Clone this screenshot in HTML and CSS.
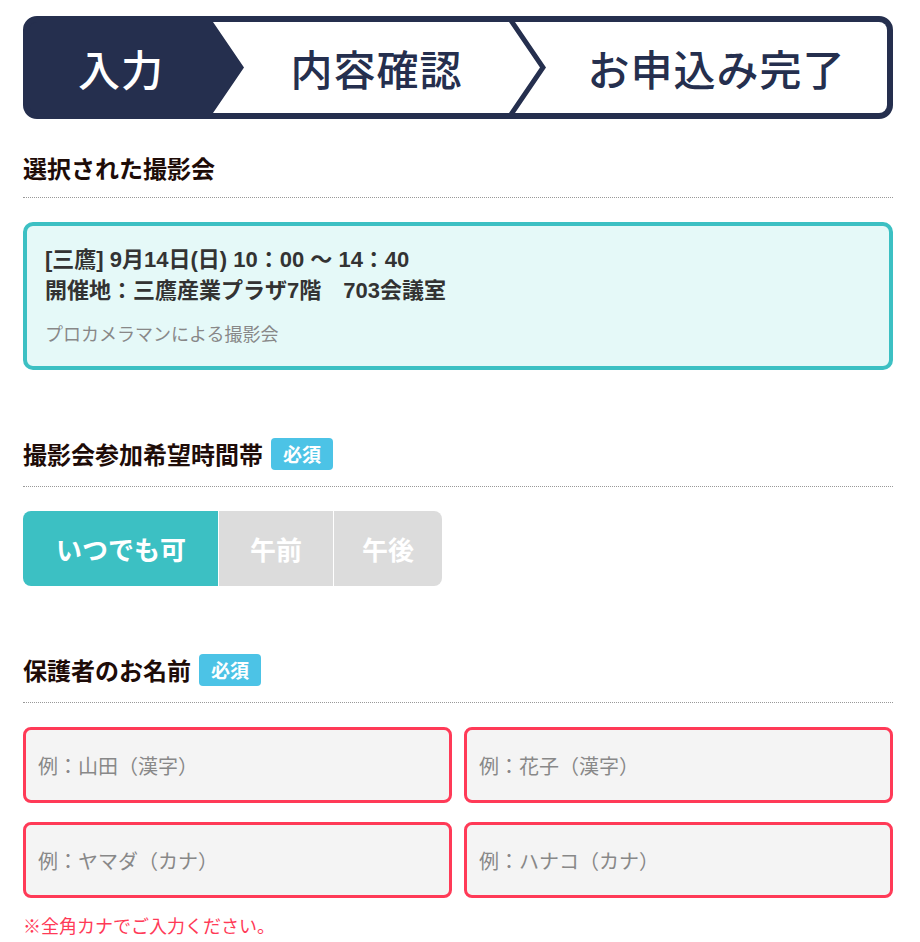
FILE: index.html
```html
<!DOCTYPE html>
<html lang="ja">
<head>
    <meta charset="UTF-8">
    <meta name="viewport" content="width=device-width, initial-scale=1.0">
    <title>撮影会お申込み</title>
    <link rel="stylesheet" href="styles.css">
</head>
<body>
    <div class="page">
        <ol class="steps">
            <li class="step step-current">入力</li>
            <li class="step step-mid">内容確認</li>
            <li class="step step-last">お申込み完了</li>
        </ol>

        <section class="section section-first">
            <h2 class="section-head">選択された撮影会</h2>
            <div class="event-card">
                <p class="event-title">[三鷹] 9月14日(日) 10：00 〜 14：40<br>開催地：三鷹産業プラザ7階　703会議室</p>
                <p class="event-note">プロカメラマンによる撮影会</p>
            </div>
        </section>

        <section class="section">
            <h2 class="section-head">撮影会参加希望時間帯<span class="required">必須</span></h2>
            <div class="segments">
                <button class="segment segment-on">いつでも可</button>
                <button class="segment">午前</button>
                <button class="segment">午後</button>
            </div>
        </section>

        <section class="section">
            <h2 class="section-head">保護者のお名前<span class="required">必須</span></h2>
            <div class="name-grid">
                <input type="text" class="field" placeholder="例：山田（漢字）">
                <input type="text" class="field" placeholder="例：花子（漢字）">
                <input type="text" class="field" placeholder="例：ヤマダ（カナ）">
                <input type="text" class="field" placeholder="例：ハナコ（カナ）">
            </div>
            <p class="field-note">※全角カナでご入力ください。</p>
        </section>
    </div>
</body>
</html>
```

FILE: styles.css
```css
body {
    margin: 0;
    padding: 0;
    background: #fff;
    color: #333;
    font-family: "Liberation Sans", "Noto Sans CJK JP", sans-serif;
}

.page {
    padding: 16px 27px 0 23px;
}

/* step bar */
.steps {
    display: flex;
    height: 91px;
    margin: 0;
    padding: 0;
    list-style: none;
    background: #252f4e;
    border: 6px solid #252f4e;
    border-radius: 14px;
    overflow: hidden;
}

.step {
    display: flex;
    align-items: center;
    justify-content: center;
    box-sizing: border-box;
    font-family: "Noto Sans CJK JP", sans-serif;
    font-size: 42px;
    font-weight: 500;
    color: #252f4e;
    letter-spacing: 1px;
}

.step-current {
    flex: none;
    width: 184px;
    color: #fff;
}

.step-mid {
    flex: none;
    width: 327px;
    padding: 0 31px;
    background: #fff;
    clip-path: polygon(0 0, 296px 0, 100% 50%, 296px 100%, 0 100%, 31px 50%);
}

.step-last {
    flex: 1;
    margin-left: -25px;
    padding-left: 31px;
    background: #fff;
    clip-path: polygon(0 0, 100% 0, 100% 100%, 0 100%, 31px 50%);
}

/* sections */
.section {
    margin-top: 64px;
}

.section-first {
    margin-top: 32px;
}

.section-head {
    display: flex;
    align-items: center;
    min-height: 34px;
    margin: 0 0 24px;
    padding-bottom: 12px;
    border-bottom: 1px dotted #999;
    font-family: "Noto Sans CJK JP", sans-serif;
    font-size: 24px;
    font-weight: 700;
    line-height: 34px;
    color: #1e0c08;
}

.required {
    display: inline-block;
    margin: 4px 0 4px 8px;
    padding: 0 12px;
    height: 32px;
    line-height: 32px;
    border-radius: 4px;
    background: #4cc3e6;
    color: #fff;
    font-size: 19px;
}

/* selected event */
.event-card {
    padding: 18px 18px 19px;
    background: #e5f9f8;
    border: 4px solid #3cc0c3;
    border-radius: 10px;
}

.event-title {
    margin: 0;
    font-size: 22px;
    font-weight: 700;
    line-height: 31px;
    color: #333;
}

.event-note {
    margin: 17px 0 0;
    font-size: 18px;
    line-height: 24px;
    color: #888;
}

/* time segments */
.segments {
    display: flex;
    gap: 1px;
}

.segment {
    height: 75px;
    padding: 0 31px;
    border: none;
    background: #dcdcdc;
    color: #fff;
    font-family: "Noto Sans CJK JP", sans-serif;
    font-size: 26px;
    font-weight: 700;
    cursor: pointer;
}

.segment:first-child {
    border-radius: 8px 0 0 8px;
    padding: 0 32px 0 33px;
}

.segment:last-child {
    border-radius: 0 8px 8px 0;
    padding: 0 28px;
}

.segment-on {
    background: #3cc0c3;
}

/* name inputs */
.name-grid {
    display: grid;
    grid-template-columns: 1fr 1fr;
    gap: 19px 12px;
}

.field {
    box-sizing: border-box;
    width: 100%;
    height: 76px;
    padding: 4px 12px 0;
    border: 3px solid #ff3a57;
    border-radius: 8px;
    background: #f4f4f4;
    font-family: "Liberation Sans", "Noto Sans CJK JP", sans-serif;
    font-size: 20px;
    color: #333;
}

.field::placeholder {
    color: #888;
}

.field-note {
    margin: 16px 0 0;
    font-size: 18px;
    line-height: 26px;
    color: #ff3a57;
}
```
